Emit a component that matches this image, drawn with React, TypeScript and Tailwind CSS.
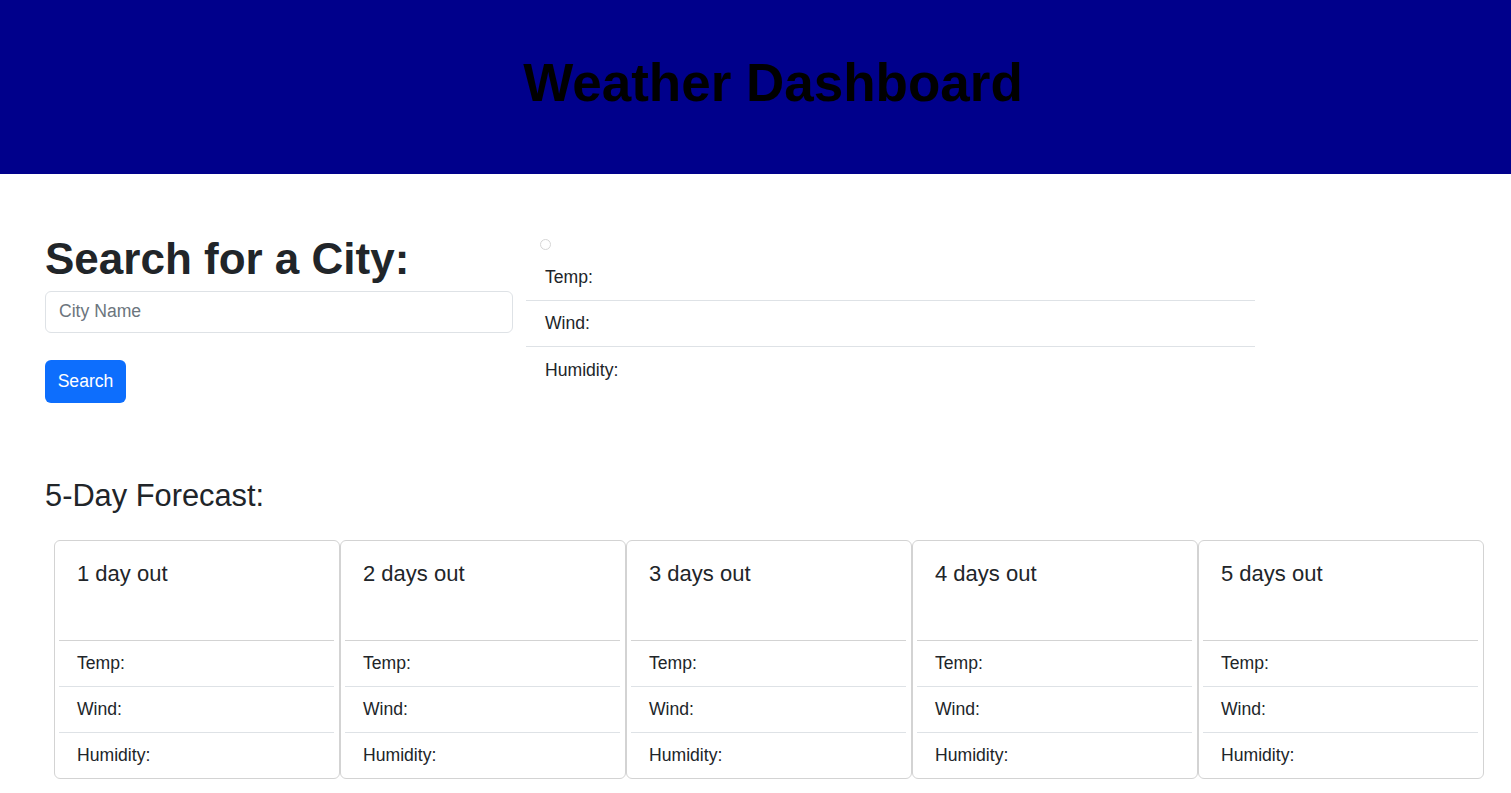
const font = { fontFamily: '"Liberation Sans", Arial, sans-serif' }

const days = ['1 day out', '2 days out', '3 days out', '4 days out', '5 days out']
const stats = ['Temp:', 'Wind:', 'Humidity:']

function ForecastCard({ title }: { title: string }) {
  return (
    <div className="w-[286px] h-[239px] border border-[#d3d3d3] rounded-[6px] bg-white flex flex-col">
      <div className="h-[100px] pl-[18px] pt-[20px] ml-[4px] mr-[5px] border-b border-[#d3d3d3]">
        <h5 className="text-[22px] leading-[1.2] font-medium text-[#212529]">{title}</h5>
      </div>
      <ul className="ml-[4px] mr-[5px]">
        {stats.map((s, i) => (
          <li
            key={s}
            className={`flex items-center pl-[18px] text-[17.6px] text-[#212529] ${
              i < stats.length - 1 ? 'h-[46px] border-b border-[#dee2e6]' : 'h-[45px]'
            }`}
          >
            {s}
          </li>
        ))}
      </ul>
    </div>
  )
}

export default function App() {
  return (
    <div className="min-h-screen bg-white text-[#212529]" style={font}>
      <header className="h-[174px] bg-[#00008b] pt-[51px] pl-[35px] text-center">
        <h1 className="text-[53px] leading-[1.2] font-bold text-black">Weather Dashboard</h1>
      </header>

      <main className="pl-[45px] pr-[27px]">
        <div className="flex gap-[13px]">
          <section className="w-[468px] pt-[59px]">
            <h1 className="text-[44px] leading-[1.2] font-bold text-[#212529]">Search for a City:</h1>
            <input
              type="text"
              placeholder="City Name"
              className="mt-[5px] w-full h-[42px] rounded-[6px] border border-[#dee2e6] px-[13px] text-[17.6px] text-[#212529] placeholder:text-[#6c757d] outline-none"
            />
            <button className="mt-[27px] h-[43px] w-[81px] rounded-[6px] bg-[#0d6efd] text-white text-[17.6px]">
              Search
            </button>
          </section>

          <section className="w-[729px] pt-[65px]">
            <div className="h-[16px] pl-[14px]">
              <span className="block w-[11px] h-[11px] rounded-full border border-[#d6d6d6]" />
            </div>
            <ul>
              {stats.map((s, i) => (
                <li
                  key={s}
                  className={`h-[46px] flex items-center pl-[19px] text-[17.6px] ${
                    i < stats.length - 1 ? 'border-b border-[#dee2e6]' : ''
                  }`}
                >
                  {s}
                </li>
              ))}
            </ul>
          </section>
        </div>

        <h3 className="mt-[75px] text-[30.8px] leading-[1.2] font-medium">5-Day Forecast:</h3>

        <div className="mt-[25px] ml-[9px] flex">
          {days.map((d) => (
            <ForecastCard key={d} title={d} />
          ))}
        </div>
      </main>
    </div>
  )
}
